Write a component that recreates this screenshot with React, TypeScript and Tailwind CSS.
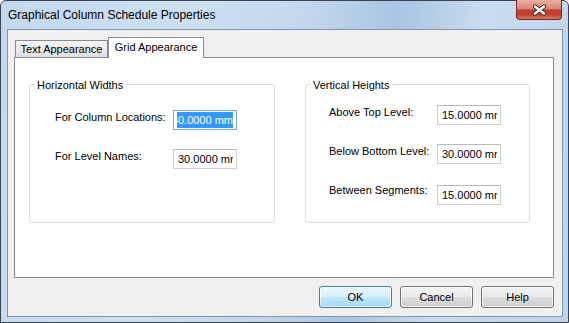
const font = "font-['Tahoma','Liberation_Sans',Arial,sans-serif]";

const leftRows = [
  { label: "For Column Locations:", value: "30.0000 mm", selected: true },
  { label: "For Level Names:", value: "30.0000 mm", selected: false }
];

const rightRows = [
  { label: "Above Top Level:", value: "15.0000 mm", gap: "mt-0", lift: "" },
  { label: "Below Bottom Level:", value: "30.0000 mm", gap: "mt-[19px]", lift: "" },
  { label: "Between Segments:", value: "15.0000 mm", gap: "mt-[21px]", lift: "-mt-[2px]" }
];

function CloseGlyph() {
  return (
    <svg width="15" height="12" viewBox="0 0 15 12" aria-hidden="true">
      <path d="M3 2.5 L12 9.5 M12 2.5 L3 9.5" stroke="#3b3030" strokeWidth="4.2" strokeLinecap="round" fill="none" />
      <path d="M3 2.5 L12 9.5 M12 2.5 L3 9.5" stroke="#ffffff" strokeWidth="2.3" strokeLinecap="round" fill="none" />
    </svg>
  );
}

function Field({ value, selected }: { value: string; selected?: boolean }) {
  return (
    <div
      className={`h-[20px] w-[64px] shrink-0 border bg-white px-[3px] ${
        selected ? "border-[#7ca7d6]" : "border-[#c9ced5] border-t-[#b5bac2]"
      }`}
    >
      <div
        className={`flex h-full items-center overflow-hidden whitespace-nowrap text-[11px] ${
          selected ? "justify-end" : "justify-start"
        }`}
      >
        <span
          className={`shrink-0 leading-[16px] ${
            selected ? "bg-[#3399ff] text-white" : "pl-[1px] text-black"
          }`}
        >
          {value}
        </span>
      </div>
    </div>
  );
}

function Button({ label, primary }: { label: string; primary?: boolean }) {
  return (
    <button
      type="button"
      className={`flex h-[22px] w-[73px] items-center justify-center rounded-[3px] border text-[11px] text-black shadow-[inset_0_0_0_1px_rgba(255,255,255,0.75)] ${
        primary
          ? "border-[#3c7fb1] bg-[linear-gradient(180deg,#eaf6fd_0%,#d9f0fc_48%,#bee6fd_52%,#a7d9f5_100%)]"
          : "border-[#707070] bg-[linear-gradient(180deg,#f2f2f2_0%,#ebebeb_48%,#dddddd_52%,#cfcfcf_100%)]"
      }`}
    >
      {label}
    </button>
  );
}

export default function App() {
  return (
    <div className={`h-[323px] w-[569px] bg-white ${font} text-black`}>
      <div className="flex h-full w-full flex-col rounded-t-[6px] border border-[#3d4450] bg-[linear-gradient(100deg,#c3d7ee_0%,#cde0f3_30%,#c2d7ed_50%,#a9c5e3_64%,#c9dcf0_78%,#bcd3eb_100%)]">
        <div className="flex h-[28px] shrink-0 items-start">
          <span className="pl-[7px] pt-[7px] font-['Liberation_Sans',Arial,sans-serif] text-[12px] leading-[15px]">
            Graphical Column Schedule Properties
          </span>
          <div className="-mt-px mr-[6px] ml-auto flex h-[20px] w-[46px] items-center justify-center rounded-b-[4px] border border-t-0 border-[#6e2c24] bg-[linear-gradient(180deg,#eab0a2_0%,#d98878_45%,#c2402f_52%,#c4412f_78%,#dc7a5f_100%)]">
            <CloseGlyph />
          </div>
        </div>

        <div className="mr-[5px] ml-[6px] flex h-[288px] flex-col border border-[#8395aa] bg-[#f0f0f0] px-[5px]">
          <div className="relative z-10 mt-[7px] flex h-[21px] items-end pl-[2px]">
            <div className="mb-px flex h-[17px] w-[93px] items-center justify-center border border-b-0 border-[#898c95] bg-[linear-gradient(180deg,#f4f4f4_0%,#ebebeb_50%,#dedede_100%)] text-[11px]">
              Text Appearance
            </div>
            <div className="flex h-[21px] w-[96px] items-center justify-center border border-b-0 border-[#898c95] bg-white pb-px text-[11px]">
              Grid Appearance
            </div>
          </div>

          <div className="-mt-px mr-[3px] ml-px flex h-[221px] gap-[30px] border border-[#898c95] bg-white pt-[26px] pl-[14px]">
            <div className="relative h-[139px] w-[246px] rounded-[3px] border border-[#d5dfe5]">
              <span className="absolute top-[-7px] left-[5px] bg-white px-[2px] text-[11px] leading-[14px]">
                Horizontal Widths
              </span>
              <div className="flex flex-col gap-[19px] pt-[25px] pl-[25px]">
                {leftRows.map((row) => (
                  <div key={row.label} className="flex items-start">
                    <span className="w-[118px] shrink-0 text-[11px] leading-[14px]">{row.label}</span>
                    <Field value={row.value} selected={row.selected} />
                  </div>
                ))}
              </div>
            </div>

            <div className="relative h-[139px] w-[225px] rounded-[3px] border border-[#d5dfe5]">
              <span className="absolute top-[-7px] left-[5px] bg-white px-[2px] text-[11px] leading-[14px]">
                Vertical Heights
              </span>
              <div className="flex flex-col pt-[20px] pl-[23px]">
                {rightRows.map((row) => (
                  <div key={row.label} className={`flex items-start ${row.gap}`}>
                    <span className={`w-[108px] shrink-0 text-[11px] leading-[14px] ${row.lift}`}>
                      {row.label}
                    </span>
                    <Field value={row.value} />
                  </div>
                ))}
              </div>
            </div>
          </div>

          <div className="mt-[8px] mr-[3px] flex justify-end gap-[8px]">
            <Button label="OK" primary />
            <Button label="Cancel" />
            <Button label="Help" />
          </div>
        </div>
      </div>
    </div>
  );
}
